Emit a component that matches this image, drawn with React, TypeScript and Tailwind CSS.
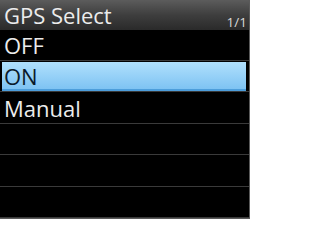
import React from "react";

const rows: { label: string; h: string; selected?: boolean }[] = [
  { label: "OFF", h: "h-[31px]" },
  { label: "ON", h: "h-[31px]", selected: true },
  { label: "Manual", h: "h-[32px]" },
  { label: "", h: "h-[31px]" },
  { label: "", h: "h-[32px]" },
  { label: "", h: "h-[31px]" },
];

export default function App() {
  return (
    <div
      className="w-[250px] h-[219px] bg-black border-r border-b border-[#5a5a5a] overflow-hidden flex flex-col"
      style={{ fontFamily: '"Open Sans", "Noto Sans", sans-serif' }}
    >
      <div className="h-[30px] shrink-0 bg-gradient-to-b from-[#5c5c5c] via-[#3e3e3e] to-[#2a2a2a] flex items-end justify-between pl-[4px] pr-[2px]">
        <span className="text-[22px] leading-[30px] text-[#ececec]">GPS Select</span>
        <span className="text-[13.5px] leading-none text-[#d8d8d8] mb-[1px]">1/1</span>
      </div>
      {rows.map((r, i) => (
        <div
          key={i}
          className={`${r.h} shrink-0 border-b border-[#3a3a3a] flex`}
        >
          {r.selected ? (
            <div className="flex-1 ml-[2px] mr-[3px] mt-[1px] bg-gradient-to-b from-[#b0e0fc] to-[#7ec3f3] border-b-2 border-[#4d9edb] flex items-center pl-[2px]">
              <span className="text-[22px] leading-none text-[#0a1a2a]">{r.label}</span>
            </div>
          ) : (
            <div className="flex-1 flex items-center pl-[4px]">
              <span className="text-[22px] leading-none text-[#ececec]">{r.label}</span>
            </div>
          )}
        </div>
      ))}
    </div>
  );
}
